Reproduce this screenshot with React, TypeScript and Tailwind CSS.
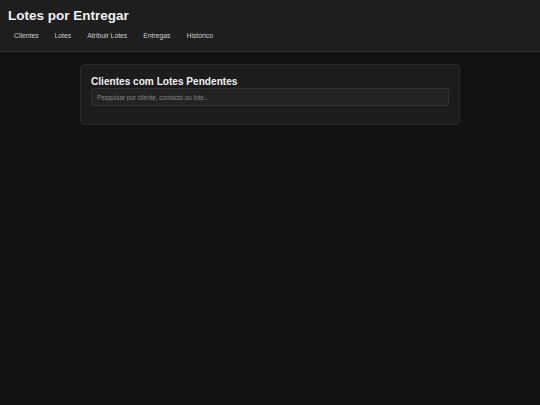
import React from "react";

export default function App() {
  const nav = ["Clientes", "Lotes", "Atribuir Lotes", "Entregas", "Histórico"];
  return (
    <div
      className="min-h-[405px] w-full bg-[#121212] text-[#e0e0e0]"
      style={{ fontFamily: '"Liberation Sans", Arial, sans-serif' }}
    >
      <header className="h-[52px] border-b border-[#333333] bg-[#1e1e1e] px-[8px] pt-[7px]">
        <h1 className="text-[13.5px] font-bold leading-[18px] text-[#f0f0f0]">
          Lotes por Entregar
        </h1>
        <nav className="mt-[6px] flex gap-[4px]">
          {nav.map((n) => (
            <span key={n} className="px-[6px] text-[6.8px] leading-[10px] text-[#cccccc]">
              {n}
            </span>
          ))}
        </nav>
      </header>
      <main className="flex justify-center pt-[12px]">
        <div className="w-[380px] rounded-[4px] border border-[#2a2a2a] bg-[#1c1c1c] px-[10px] pb-[18px] pt-[10px]">
          <h2 className="text-[10.1px] font-bold leading-[13px] text-[#f0f0f0]">
            Clientes com Lotes Pendentes
          </h2>
          <input
            className="block h-[18px] w-full rounded-[2px] border border-[#333333] bg-[#232323] px-[5px] text-[6.3px] text-[#dddddd] placeholder:text-[#888888] outline-none"
            placeholder="Pesquisar por cliente, contacto ou lote..."
          />
        </div>
      </main>
    </div>
  );
}
